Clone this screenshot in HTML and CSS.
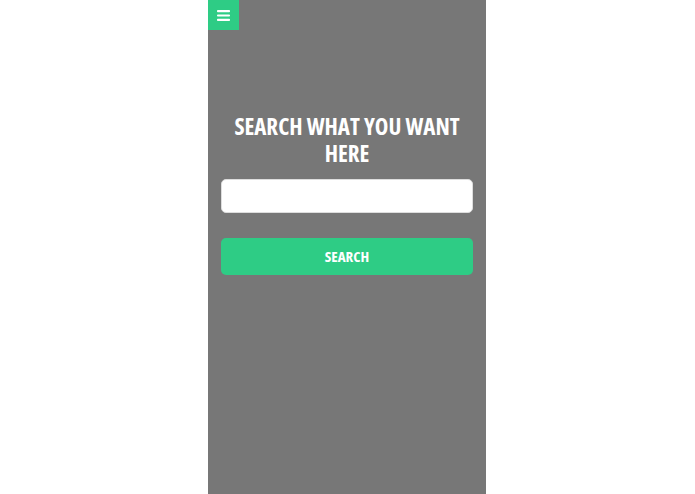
FILE: index.html
```html
<!DOCTYPE html>
<html lang="en">
<head>
    <meta charset="UTF-8">
    <meta name="viewport" content="width=device-width, initial-scale=1.0">
    <title>Search</title>
    <link rel="stylesheet" href="styles.css">
</head>
<body>
    <div class="page">
        <a href="#" class="menu-toggle" aria-label="Menu">
            <svg width="13" height="11" viewBox="0 0 13 11">
                <rect x="0" y="0" width="13" height="2.2" rx="0.8" fill="#fff"/>
                <rect x="0" y="4.4" width="13" height="2.2" rx="0.8" fill="#fff"/>
                <rect x="0" y="8.8" width="13" height="2.2" rx="0.8" fill="#fff"/>
            </svg>
        </a>

        <!-- Formulário de busca -->
        <form class="search-form" onsubmit="return false;">
            <h1>Search what you want here</h1>
            <input type="text" class="search-input">
            <button class="button" type="submit">Search</button>
        </form>
    </div>
</body>
</html>
```

FILE: styles.css
```css
* { margin: 0; padding: 0; box-sizing: border-box; }
html, body { height: 100%; }
body {
    display: flex;
    justify-content: center;
    padding-right: 1px;
    background-color: #fff;
    font-family: "Open Sans", "DejaVu Sans Condensed", sans-serif;
    font-stretch: 75%;
}
.page {
    width: 278px;
    height: 100%;
    background-color: #777;
}
.menu-toggle {
    width: 31px;
    height: 30px;
    background-color: #2ecc85;
    display: flex;
    align-items: center;
    justify-content: center;
}
.search-form {
    padding: 83px 13px 0;
    display: flex;
    flex-direction: column;
}
.search-form h1 {
    color: #fff;
    font-size: 23px;
    font-weight: 700;
    line-height: 27px;
    text-align: center;
    text-transform: uppercase;
    margin-bottom: 12px;
}
.search-input {
    height: 34px;
    border: 1px solid #ddd;
    border-radius: 5px;
    background-color: #fff;
    margin-bottom: 25px;
}
.button {
    height: 37px;
    border: none;
    border-radius: 5px;
    background-color: #2ecc85;
    color: #fff;
    font-family: inherit;
    font-stretch: 75%;
    font-size: 15px;
    font-weight: 700;
    text-transform: uppercase;
    padding-bottom: 2px;
    cursor: pointer;
}
```
